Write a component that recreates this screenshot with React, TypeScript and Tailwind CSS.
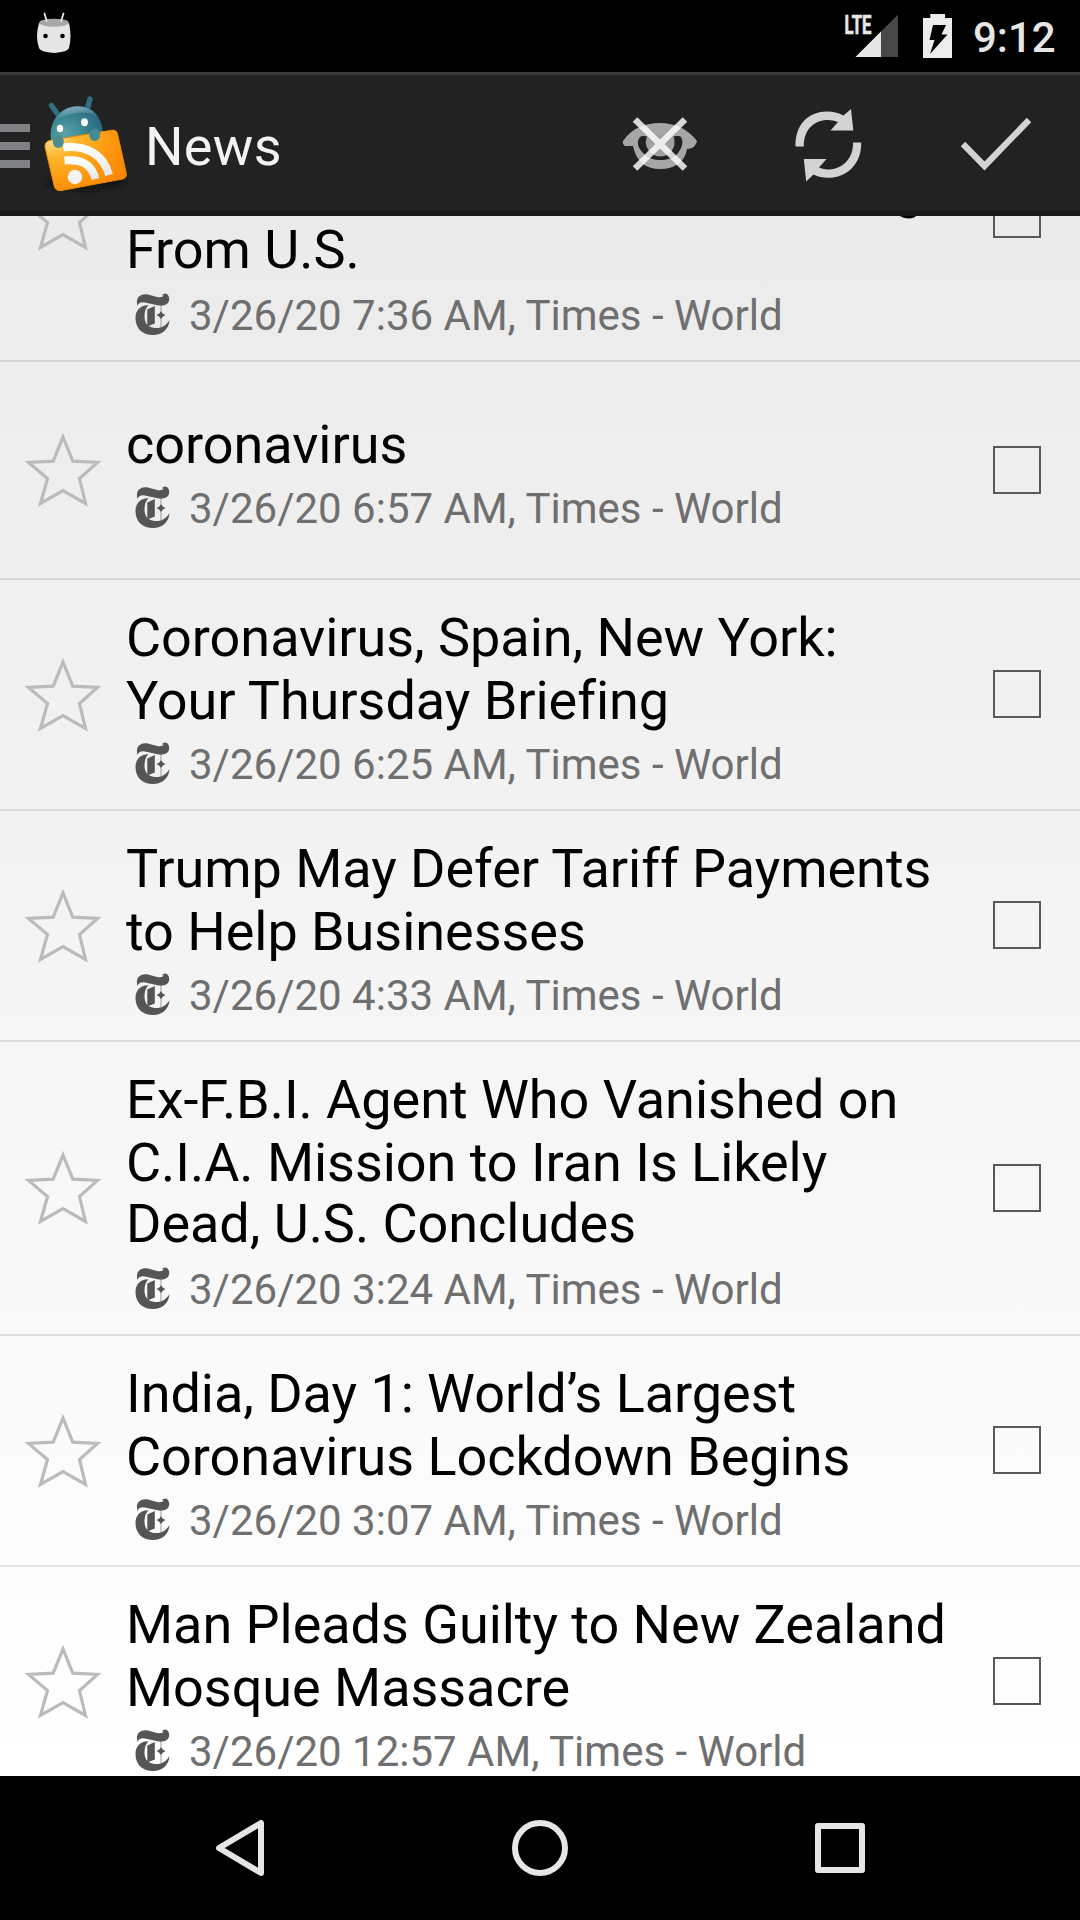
import type { ReactNode } from "react";

type Item = { lines: ReactNode[]; meta: string };

const items: Item[] = [
  {
    lines: ["\u00a0", <span className="-ml-0.5">The Virus Restrictions on Coming</span>, "From U.S."],
    meta: "3/26/20 7:36 AM, Times - World",
  },
  { lines: ["coronavirus"], meta: "3/26/20 6:57 AM, Times - World" },
  { lines: ["Coronavirus, Spain, New York:", "Your Thursday Briefing"], meta: "3/26/20 6:25 AM, Times - World" },
  { lines: ["Trump May Defer Tariff Payments", "to Help Businesses"], meta: "3/26/20 4:33 AM, Times - World" },
  { lines: ["Ex-F.B.I. Agent Who Vanished on", "C.I.A. Mission to Iran Is Likely", "Dead, U.S. Concludes"], meta: "3/26/20 3:24 AM, Times - World" },
  { lines: ["India, Day 1: World’s Largest", "Coronavirus Lockdown Begins"], meta: "3/26/20 3:07 AM, Times - World" },
  { lines: ["Man Pleads Guilty to New Zealand", "Mosque Massacre"], meta: "3/26/20 12:57 AM, Times - World" },
];

function StatusBar() {
  return (
    <div className="flex h-[72px] shrink-0 items-center bg-black pl-9 pr-[25px] text-[#e6e6e6]">
      <svg className="mb-1.5 h-[42px] w-9" viewBox="0 0 36 42">
        <path d="M3 11 Q18 15 33 11 Q36 25 33 36 Q32 40 18 41 Q4 40 3 36 Q-1 25 3 11Z" fill="#e6e6e6" />
        <ellipse cx="18" cy="10.7" rx="14.7" ry="4" fill="#a6a6a6" />
        <path d="M8.500 1.500L10.800 9M27.500 1.500L25.200 9" stroke="#e6e6e6" strokeWidth="1.800" strokeLinecap="round" />
        <circle cx="9.5" cy="24" r="2.3" fill="#000" />
        <circle cx="26.5" cy="24" r="2.3" fill="#000" />
      </svg>
      <div className="flex-1" />
      <svg className="h-[46px] w-[54px] overflow-visible" viewBox="845 13 54 46">
        <path d="M898 14.500V57H855.500Z" fill="#474747" />
        <path d="M881 31.500V57H855.500Z" fill="#e6e6e6" />
        <text x="844.500" y="33.600" textLength="27" lengthAdjust="spacingAndGlyphs" fontFamily="Roboto" fontWeight="700" fontSize="26" fill="#e6e6e6" stroke="#e6e6e6" strokeWidth="0.700">LTE</text>
      </svg>
      <svg className="ml-6 h-[46px] w-[30px]" viewBox="923 13 30 46">
        <path d="M930.300 14H945V18H952V58H923V18H930.300Z" fill="#ececec" />
        <path d="M933 25H946L941.500 34.500H947.500L930 54L934.500 40H929.500Z" fill="#000" />
      </svg>
      <span className="ml-5 mt-0.5 w-[82px] whitespace-nowrap text-[42px] font-medium leading-[49px]">9:12</span>
    </div>
  );
}

function AppIcon() {
  return (
    <svg className="ml-[10px] h-[105px] w-[90px] shrink-0" viewBox="40 90 90 105">
      <defs>
        <radialGradient id="head" cx="0.28" cy="0.6" r="0.85">
          <stop offset="0" stopColor="#5aa3a6" />
          <stop offset="0.5" stopColor="#36808e" />
          <stop offset="1" stopColor="#246080" />
        </radialGradient>
        <radialGradient id="card" cx="0.08" cy="0.12" r="1.1">
          <stop offset="0" stopColor="#ffe49a" />
          <stop offset="0.3" stopColor="#fdb62b" />
          <stop offset="0.65" stopColor="#fc9a12" />
          <stop offset="1" stopColor="#fd8400" />
        </radialGradient>
        <linearGradient id="shine" x1="0" y1="0" x2="0.3" y2="1">
          <stop offset="0" stopColor="#fff" stopOpacity="0.45" />
          <stop offset="1" stopColor="#fff" stopOpacity="0" />
        </linearGradient>
        <linearGradient id="wave" x1="0" y1="0" x2="0" y2="1">
          <stop offset="0" stopColor="#fff" />
          <stop offset="1" stopColor="#e5e5e5" />
        </linearGradient>
        <filter id="soft" x="-0.3" y="-0.6" width="1.6" height="2.2">
          <feGaussianBlur stdDeviation="2" />
        </filter>
      </defs>
      <ellipse cx="86" cy="182" rx="40" ry="8" fill="#161616" filter="url(#soft)" />
      <path d="M51.500 105.500L57.500 114M90 99L87.500 108" stroke="#2f7080" strokeWidth="5.400" strokeLinecap="round" />
      <path d="M51.500 144C47.500 124 57 108 76 106C93 105 102 117 103 134L100 150L56 152Z" fill="url(#head)" />
      <path d="M56 120C61 109 71 106 78 106.500C86 106.500 93 110 97 116C85 110 70 112 56 120Z" fill="url(#shine)" />
      <path d="M49.500 140.500L112 130.200Q116.600 129.600 117.500 134L126.300 173.500Q127 177.800 122.500 179L61 190.600Q56 191 54.500 187L45 147Q44.500 142 49.500 140.500Z" fill="url(#card)" stroke="#f58a00" strokeWidth="1" />
      <path d="M63.500 147.300C87 145 104 155 109 175" fill="none" stroke="url(#wave)" strokeWidth="8" />
      <path d="M64.500 160.500C82 159 92 165 95.500 179" fill="none" stroke="url(#wave)" strokeWidth="8" />
      <circle cx="75" cy="177" r="7.200" fill="#f4f4f4" />
      <ellipse cx="60" cy="128.500" rx="3.200" ry="3.800" fill="#fff" />
      <ellipse cx="84.500" cy="122.300" rx="3.400" ry="4" fill="#fff" />
      <ellipse cx="58.300" cy="141.800" rx="5.500" ry="6.200" fill="#4d8d91" />
      <ellipse cx="94.800" cy="134.800" rx="5.500" ry="6.200" fill="#438c93" />
    </svg>
  );
}

function ActionBar() {
  return (
    <header className="flex h-36 shrink-0 items-center border-b-[6px] border-t-[3px] border-b-[#1b1b1b] border-t-[#3a3a3a] bg-[#222222]">
      <div className="mt-[7px] flex w-[30px] flex-col gap-[10px]">
        <div className="h-2 bg-[#808184]" />
        <div className="h-2 bg-[#808184]" />
        <div className="h-2 bg-[#808184]" />
      </div>
      <AppIcon />
      <h1 className="ml-[15px] mt-2 flex-1 text-[54px] leading-[63px] tracking-[0.3px] text-[#f3f3f3]">News</h1>
      <svg className="h-[135px] w-[76px]" viewBox="622 75 76 135">
        <path d="M623 141C632 128 645 123 660 123C675 123 688 129 697 141C696 146 692 149 687 149C685 162 675 169 660 169C645 169 636 161 633 146H625Q622 144 623 141Z" fill="#a6a6a6" />
        <path d="M640 137C636 142 638 148 643 153C648 158.500 654 160 661 160C668 160 674 158 678 153C682 148 684 142 681 137C678 135 676 137 673 136H648C645 137 643 135 640 137Z" fill="#222" />
        <path d="M648 134H673Q677 145 671 152Q666 156.500 660 156.500Q653 156 649 151Q643 143 648 134Z" fill="#a0a0a0" />
        <path d="M635 119.500L685 168.500M685 119.500L635 168.500" stroke="#fff" strokeOpacity="0.82" strokeWidth="6.500" />
      </svg>
      <svg className="ml-[93px] h-[135px] w-[76px]" viewBox="791 75 76 135">
        <g fill="#d3d3d3">
          <path d="M795.500 146.500C795 125 808 111.500 827 111.500Q836 111.500 843.500 115.500L851 109L853.300 130.500H830.500L838 122Q833 120 828 120C814 120 803.500 130 803.800 146.500Z" />
          <path d="M861.200 142.500C861.700 164 847 177.800 828 177.800Q820 177.800 813.500 174.500L806.200 181.500L803.800 159H826.500L819 167.500Q823.500 169.500 828 169.500C842 169.500 853.500 159 853 142.500Z" />
        </g>
      </svg>
      <svg className="ml-[91px] mr-[46px] h-[135px] w-[76px]" viewBox="958 75 76 135">
        <path d="M963 144L984.500 166L1029 120" fill="none" stroke="#d3d3d3" strokeWidth="6.200" />
      </svg>
    </header>
  );
}

function FeedIcon() {
  return (
    <svg className="h-[42px] w-9 shrink-0" viewBox="0 0 36 42">
      <path d="M2.500 13C0 4 6 0 13 1.500L22 4Q28 5 28.500 2L26.500 2.500Q30 -1 33 2Q36 7 32 11Q27 14 19 11.500L10 9.500Q4 8.500 2.500 13Z" fill="#555" />
      <path d="M13.500 12.300C5 12 .5 18 .5 25C.5 36 8 42 18 42C27 42 34 36 34.500 27C31 33 26 35.500 20 35C12 34.500 9.500 29 9.500 23.500Q9.500 16 13.500 12.300Z" fill="#555" />
      <path d="M12.300 16.500L19.800 13V30.500L12.300 33.500Z" fill="#555" />
      <path d="M26 12V34.500" stroke="#777" strokeWidth="0.700" />
      <path d="M26 18.300L28 20.800L30.500 22L28 23.500L26 26L24 23.500L21.500 22L24 20.800Z" fill="#555" />
    </svg>
  );
}

function NewsRow({ item }: { item: Item }) {
  return (
    <li className="box-content flex min-h-[216px] shrink-0 items-center border-b-2 border-black/10">
      <svg className="ml-[23px] h-20 w-20 shrink-0" viewBox="0 0 80 80">
        <path d="M40 7L49.800 31.200L74.500 32.500L56.500 48.500L62.500 73.500L40 60.500L17.500 73.500L24.500 48.500L5.500 32.500L30.200 31.200Z" fill="none" stroke="#bbb" strokeWidth="3.200" strokeMiterlimit="10" />
      </svg>
      <div className="ml-[23px] flex-1 pb-[19px] pt-[26px]">
        <h2 className="whitespace-nowrap text-[54px] leading-[63px] tracking-[-0.04px] text-black">
          {item.lines.map((line, i) => (
            <div key={i} className={i === 2 ? "-mt-0.5 mb-0.5" : ""}>
              {line}
            </div>
          ))}
        </h2>
        <div className="flex h-[58px] items-end">
          <div className="ml-[9px] pb-[6px]">
            <FeedIcon />
          </div>
          <p className="ml-[18px] whitespace-nowrap text-[42px] leading-[51px] text-[#6f6f6f]">{item.meta}</p>
        </div>
      </div>
      <div className="mb-px mr-[39px] h-12 w-12 shrink-0 border-2 border-[#59595a]" />
    </li>
  );
}

function NavBar() {
  return (
    <nav className="flex h-36 shrink-0 items-center justify-between bg-black pl-[210px] pr-[210px]">
      <svg className="h-[60px] w-[60px]" viewBox="0 0 60 60" fill="none" stroke="#e6e6e6" strokeWidth="6" strokeLinejoin="round">
        <path d="M9 30L51 5V55Z" />
      </svg>
      <svg className="h-[60px] w-[60px]" viewBox="0 0 60 60" fill="none" stroke="#e6e6e6" strokeWidth="6">
        <circle cx="30" cy="30" r="25" />
      </svg>
      <svg className="h-[60px] w-[60px]" viewBox="0 0 60 60" fill="none" stroke="#e6e6e6" strokeWidth="6" strokeLinejoin="round">
        <rect x="8" y="8" width="44" height="44" />
      </svg>
    </nav>
  );
}

export default function App() {
  return (
    <div className="flex h-[1920px] w-[1080px] flex-col overflow-hidden font-['Roboto',sans-serif]">
      <StatusBar />
      <ActionBar />
      <main className="flex min-h-0 flex-1 flex-col overflow-hidden bg-linear-to-b from-[#ebebeb] to-white">
        <ul className="-mt-[148px] flex flex-col">
          {items.map((item) => (
            <NewsRow key={item.meta} item={item} />
          ))}
        </ul>
      </main>
      <NavBar />
    </div>
  );
}
